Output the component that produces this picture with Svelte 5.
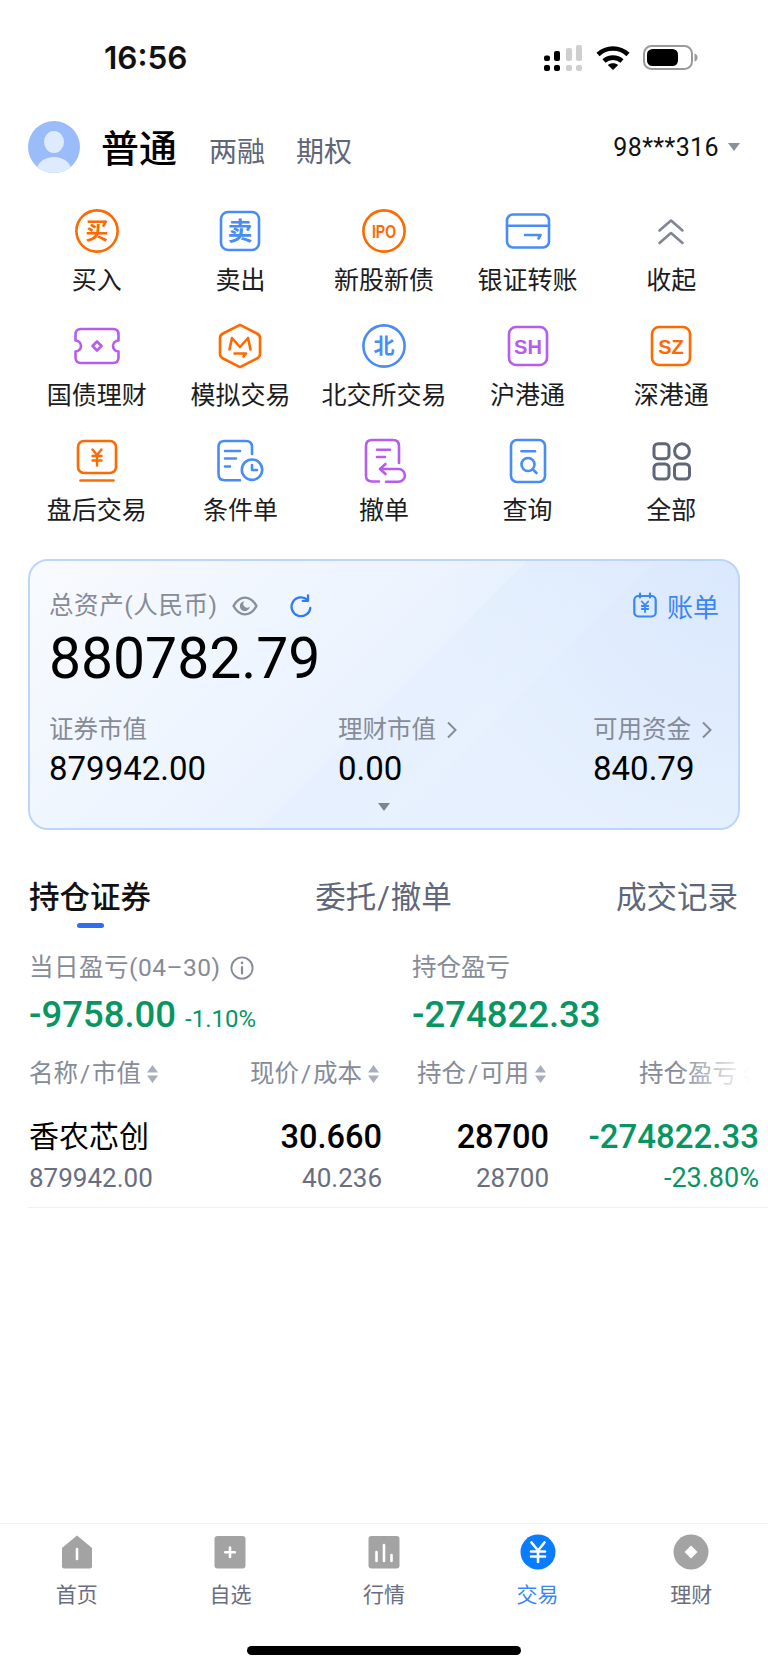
<script lang="ts">
	const actions = [
		{ id: 'buy', label: '买入' },
		{ id: 'sell', label: '卖出' },
		{ id: 'ipo', label: '新股新债' },
		{ id: 'transfer', label: '银证转账' },
		{ id: 'fold', label: '收起' },
		{ id: 'bond', label: '国债理财' },
		{ id: 'sim', label: '模拟交易' },
		{ id: 'bse', label: '北交所交易' },
		{ id: 'sh', label: '沪港通' },
		{ id: 'sz', label: '深港通' },
		{ id: 'after', label: '盘后交易' },
		{ id: 'cond', label: '条件单' },
		{ id: 'cancel', label: '撤单' },
		{ id: 'query', label: '查询' },
		{ id: 'all', label: '全部' }
	];

	const tabs = [
		{ id: 'home', label: '首页' },
		{ id: 'watch', label: '自选' },
		{ id: 'market', label: '行情' },
		{ id: 'trade', label: '交易', active: true },
		{ id: 'wealth', label: '理财' }
	];
</script>

{#snippet actionIcon(id: string)}
	<svg class="act-icon" viewBox="0 0 48 48" fill="none" stroke-width="2.6" stroke-linecap="round" stroke-linejoin="round">
		{#if id === 'buy'}
			<circle cx="24" cy="24" r="20.6" stroke="#ff6a00" />
			<text x="24" y="32" class="glyph" font-size="23" fill="#ff6a00">买</text>
		{:else if id === 'sell'}
			<rect x="5" y="5" width="38" height="38" rx="7" stroke="#4a8cf5" />
			<text x="24" y="33" class="glyph" font-size="25" fill="#4a8cf5">卖</text>
		{:else if id === 'ipo'}
			<circle cx="24" cy="24" r="20.6" stroke="#ff6a00" />
			<text x="24" y="30.5" class="latin" font-size="18" fill="#ff6a00" textLength="24" lengthAdjust="spacingAndGlyphs">IPO</text>
		{:else if id === 'transfer'}
			<rect x="3" y="7.5" width="42" height="33" rx="6" stroke="#4a8cf5" />
			<path d="M3 18.7H45" stroke="#4a8cf5" />
			<path d="M21 28H36.5L34.5 31.5" stroke="#4a8cf5" />
		{:else if id === 'fold'}
			<path d="M12.5 23.5 24 13.5 35.5 23.5M12.5 36 24 26 35.5 36" stroke="#7f8696" />
		{:else if id === 'bond'}
			<path d="M8 7H40Q45.5 7 45.5 12.5V18.5A5.5 5.5 0 0 0 45.5 29.5V35.5Q45.5 41 40 41H8Q2.5 41 2.5 35.5V29.5A5.5 5.5 0 0 0 2.5 18.5V12.5Q2.5 7 8 7Z" stroke="#b65cf0" />
			<path d="M24 19.5 28.5 24 24 28.5 19.5 24Z" stroke="#b65cf0" />
		{:else if id === 'sim'}
			<path d="M24 2.8 41 11.5Q44 13 44 16V32Q44 35 41 36.5L24 45.2 7 36.5Q4 35 4 32V16Q4 13 7 11.5Z" stroke="#ff6a00" />
			<path d="M13.5 27.5 16 16 24 25 32 16 34.5 27.5" stroke="#ff6a00" />
			<path d="M18.5 31.5H30L27.5 34.5" stroke="#ff6a00" />
		{:else if id === 'bse'}
			<circle cx="24" cy="24" r="20.6" stroke="#4a8cf5" />
			<text x="24" y="31" class="glyph" font-size="21" fill="#4a8cf5">北</text>
		{:else if id === 'sh'}
			<rect x="5" y="5" width="38" height="38" rx="7" stroke="#b65cf0" />
			<text x="24" y="31.5" class="latin" font-size="20" fill="#b65cf0">SH</text>
		{:else if id === 'sz'}
			<rect x="5" y="5" width="38" height="38" rx="7" stroke="#ff6a00" />
			<text x="24" y="31.5" class="latin" font-size="20" fill="#ff6a00">SZ</text>
		{:else if id === 'after'}
			<rect x="5" y="4" width="38" height="32" rx="6" stroke="#ff6a00" />
			<path d="M7.5 43.5H40.5" stroke="#ff6a00" />
			<path d="M19.5 12.5 24 18 28.5 12.5M24 18V28.5M19.5 19H28.5M19.5 23.5H28.5" stroke="#ff6a00" stroke-width="2.4" />
		{:else if id === 'cond'}
			<path d="M36 17V10Q36 4 30 4H8.5Q2.5 4 2.5 10V37Q2.5 43.2 8.5 43.2H24" stroke="#4a8cf5" />
			<path d="M9 14H24M9 21.5H20M9 29.5H14" stroke="#4a8cf5" />
			<circle cx="36" cy="32.7" r="10.2" stroke="#4a8cf5" />
			<path d="M36 28V33H41" stroke="#4a8cf5" />
		{:else if id === 'cancel'}
			<path d="M19 44.5H12Q6 44.5 6 38.5V9Q6 3 12 3H33Q39 3 39 9V26" stroke="#b65cf0" />
			<path d="M17 12.7H30M17 20H25" stroke="#b65cf0" />
			<path d="M21 32H38.5A6.4 6.4 0 0 1 38.5 44.8H26" stroke="#b65cf0" />
			<path d="M25.5 27 20 32 25.5 37" stroke="#b65cf0" />
		{:else if id === 'query'}
			<rect x="7" y="3" width="34" height="42" rx="6" stroke="#4a8cf5" />
			<path d="M17.5 14.3H31" stroke="#4a8cf5" />
			<circle cx="24" cy="27.5" r="6.5" stroke="#4a8cf5" />
			<path d="M28.8 32.3 32.5 36" stroke="#4a8cf5" />
		{:else if id === 'all'}
			<rect x="7" y="6.7" width="15" height="15" rx="4" stroke="#5f6679" stroke-width="3" />
			<circle cx="35" cy="14.2" r="7.4" stroke="#5f6679" stroke-width="3" />
			<rect x="7" y="27" width="15" height="15" rx="4" stroke="#5f6679" stroke-width="3" />
			<rect x="27.5" y="27" width="15" height="15" rx="4" stroke="#5f6679" stroke-width="3" />
		{/if}
	</svg>
{/snippet}

{#snippet tabIcon(id: string)}
	<svg class="tab-icon" viewBox="0 0 36 36" stroke-linecap="round">
		{#if id === 'home'}
			<path d="M18 1.5 33 14V32.5Q33 34.5 31 34.5H5Q3 34.5 3 32.5V14Z" fill="#a3a3a3" />
			<path d="M18 15V25" stroke="#fff" stroke-width="2.6" />
		{:else if id === 'watch'}
			<rect x="2.5" y="2" width="31" height="32.5" rx="3" fill="#a3a3a3" />
			<path d="M18 13.5V23M13.2 18.2H22.8" stroke="#fff" stroke-width="2.6" />
		{:else if id === 'market'}
			<rect x="2.5" y="2" width="31" height="32.5" rx="3" fill="#a3a3a3" />
			<path d="M10.5 18V27M18 11V27M25.5 21V27" stroke="#fff" stroke-width="2.6" />
		{:else if id === 'trade'}
			<circle cx="18" cy="18" r="17.5" fill="#0a7cff" />
			<path d="M11.5 8.5 18 16.5 24.5 8.5M18 16.5V28M11 17.5H25M11 22.5H25" stroke="#fff" stroke-width="2.6" fill="none" />
		{:else if id === 'wealth'}
			<circle cx="18" cy="18" r="17.5" fill="#a3a3a3" />
			<path d="M18 11.5 24.5 18 18 24.5 11.5 18Z" fill="#fff" />
		{/if}
	</svg>
{/snippet}

{#snippet sort()}
	<svg class="sort" viewBox="0 0 11 20"><path d="M5.5 1 11 8.5H0ZM5.5 19 0 11.5H11Z" fill="#a9aebb" /></svg>
{/snippet}

<div class="app">
	<div class="status">
		<span class="time">16:56</span>
		<div class="sys">
			<svg width="38" height="26" viewBox="0 0 38 26">
				<g fill="#000">
					<rect x="0" y="10.5" width="6" height="5.5" rx="2" />
					<rect x="10" y="6" width="6" height="10" rx="2" />
					<rect x="0" y="20" width="6" height="6" rx="2" />
					<rect x="10" y="20" width="6" height="6" rx="2" />
				</g>
				<g fill="#cfcfcf">
					<rect x="22" y="3" width="6" height="13" rx="2" />
					<rect x="32" y="0" width="6" height="16" rx="2" />
					<rect x="22" y="20" width="6" height="6" rx="2" />
					<rect x="32" y="20" width="6" height="6" rx="2" />
				</g>
			</svg>
			<svg class="wifi" width="34" height="25" viewBox="0 0 34 25" fill="none" stroke="#000" stroke-width="4.6">
				<path d="M2 9.5C10.5 1.5 23.5 1.5 32 9.5" />
				<path d="M8 16C13 11.5 21 11.5 26 16" />
				<path d="M17 25 11.8 20C14.8 17.6 19.2 17.6 22.2 20Z" fill="#000" stroke="none" />
			</svg>
			<svg class="batt" width="55" height="25" viewBox="0 0 55 25">
				<rect x="1" y="1" width="48" height="23" rx="7.5" fill="none" stroke="#9a9a9a" stroke-width="2" />
				<rect x="4" y="4" width="31" height="17" rx="5.5" fill="#000" />
				<path d="M51.5 8.5C53.5 9 54.5 10.5 54.5 12.5S53.5 16 51.5 16.5Z" fill="#9a9a9a" />
			</svg>
		</div>
	</div>

	<header class="head">
		<svg class="avatar" viewBox="0 0 52 52">
			<defs><clipPath id="av"><circle cx="26" cy="26" r="26" /></clipPath></defs>
			<circle cx="26" cy="26" r="26" fill="#9abcfb" />
			<g clip-path="url(#av)" fill="#deeafe">
				<ellipse cx="26" cy="21" rx="10" ry="11" />
				<ellipse cx="26" cy="49" rx="17" ry="13" />
			</g>
		</svg>
		<nav class="acct-types">
			<span class="type on">普通</span>
			<span class="type">两融</span>
			<span class="type">期权</span>
		</nav>
		<div class="acct-no">98***316<i class="caret"></i></div>
	</header>

	<section class="actions">
		{#each actions as a}
			<div class="action">
				{@render actionIcon(a.id)}
				<span>{a.label}</span>
			</div>
		{/each}
	</section>

	<section class="card">
		<div class="card-top">
			<span class="muted wide">总资产(人民币)</span>
			<svg class="eye" width="26" height="20" viewBox="0 0 26 20" fill="none">
				<path d="M1.5 10C4.5 4.6 8.5 1.6 13 1.6S21.5 4.6 24.5 10C21.5 15.4 17.5 18.4 13 18.4S4.5 15.4 1.5 10Z" stroke="#8a8f9c" stroke-width="2.4" stroke-linejoin="round" />
				<path d="M12.5 5.2A5 5 0 1 0 17.8 10.5 3.4 3.4 0 0 1 12.5 5.2Z" fill="#8a8f9c" />
			</svg>
			<svg class="refresh" width="22" height="24" viewBox="0 0 22 24" fill="none" stroke="#2f7bf0" stroke-width="2.3" stroke-linecap="round" stroke-linejoin="round">
				<path d="M17.5 6A9.4 9.4 0 1 0 20.3 14" />
				<path d="M18 1.5V6.8H12.7" />
			</svg>
			<div class="bill">
				<svg width="24" height="26" viewBox="0 0 24 26" fill="none" stroke="#3a86f4" stroke-width="2.2" stroke-linecap="round" stroke-linejoin="round">
					<rect x="1.3" y="4" width="21.4" height="20.5" rx="4" />
					<path d="M7 1.5V5.5M17 1.5V5.5" />
					<path d="M8.8 9.5 12 13 15.2 9.5M12 13V20M8.8 14H15.2M8.8 17H15.2" stroke-width="1.8" />
				</svg>
				<span>账单</span>
			</div>
		</div>
		<div class="total">880782.79</div>
		<div class="card-cols">
			<div>
				<div class="muted">证券市值</div>
				<div class="val">879942.00</div>
			</div>
			<div>
				<div class="muted">理财市值<svg class="chev" width="12" height="20" viewBox="0 0 12 20" fill="none" stroke="#868b98" stroke-width="2"><path d="M2 2.5 9.5 10 2 17.5" /></svg></div>
				<div class="val">0.00</div>
			</div>
			<div>
				<div class="muted">可用资金<svg class="chev" width="12" height="20" viewBox="0 0 12 20" fill="none" stroke="#868b98" stroke-width="2"><path d="M2 2.5 9.5 10 2 17.5" /></svg></div>
				<div class="val">840.79</div>
			</div>
		</div>
		<i class="card-caret"></i>
	</section>

	<nav class="hold-tabs">
		<span class="active">持仓证券</span>
		<span>委托<i class="sl">/</i>撤单</span>
		<span>成交记录</span>
	</nav>

	<section class="pnl">
		<div>
			<div class="pnl-label"><span class="dated">当日盈亏(04–30)</span>
				<svg class="info" width="24" height="24" viewBox="0 0 24 24" fill="none" stroke="#858b99" stroke-width="1.8" stroke-linecap="round"><circle cx="12" cy="12" r="10.6" /><path d="M12 11V17.5" stroke-width="2.2" /><path d="M12 6.8V7" stroke-width="2.6" /></svg>
			</div>
			<div class="pnl-val">-9758.00<small>-1.10%</small></div>
		</div>
		<div>
			<div class="pnl-label">持仓盈亏</div>
			<div class="pnl-val">-274822.33</div>
		</div>
	</section>

	<div class="thead">
		<span>名称<i class="sl">/</i>市值{@render sort()}</span>
		<span>现价<i class="sl">/</i>成本{@render sort()}</span>
		<span>持仓<i class="sl">/</i>可用{@render sort()}</span>
		<span class="fade">持仓盈亏{@render sort()}</span>
	</div>

	<div class="trow">
		<div>
			<div class="main name">香农芯创</div>
			<div class="sub">879942.00</div>
		</div>
		<div>
			<div class="main">30.660</div>
			<div class="sub">40.236</div>
		</div>
		<div>
			<div class="main">28700</div>
			<div class="sub">28700</div>
		</div>
		<div class="down">
			<div class="main">-274822.33</div>
			<div class="sub">-23.80%</div>
		</div>
	</div>

	<footer class="tabbar">
		<div class="tabs">
			{#each tabs as t}
				<div class="tab" class:active={t.active}>
					{@render tabIcon(t.id)}
					<span>{t.label}</span>
				</div>
			{/each}
		</div>
		<div class="home-bar"></div>
	</footer>
</div>

<style>
	:global(body) {
		margin: 0;
		background: #fff;
	}
	.app {
		width: 768px;
		height: 1669px;
		display: flex;
		flex-direction: column;
		overflow: hidden;
		background: #fff;
		color: #111;
		font-family: Roboto, 'Noto Sans CJK SC', sans-serif;
	}
	.sl {
		font-style: normal;
		padding: 0 2px;
	}

	.status {
		height: 115px;
		flex: none;
		display: flex;
		align-items: center;
		padding: 0 70px 0 104px;
		box-sizing: border-box;
	}
	.time {
		font-family: Inter, sans-serif;
		font-size: 31.5px;
		font-weight: 600;
	}
	.sys {
		margin-left: auto;
		display: flex;
		align-items: center;
	}
	.wifi {
		margin-left: 14px;
	}
	.batt {
		margin-left: 13px;
	}

	.head {
		height: 52px;
		flex: none;
		margin-top: 6px;
		padding: 0 28px;
		display: flex;
		align-items: center;
	}
	.avatar {
		width: 52px;
		height: 52px;
		flex: none;
	}
	.acct-types {
		display: flex;
		align-items: baseline;
		margin: 8px 0 0 21px;
		gap: 31px;
	}
	.type {
		font-size: 28px;
		color: #5f6679;
		line-height: 40px;
	}
	.type.on {
		font-size: 38px;
		font-weight: 500;
		color: #000;
		margin-right: 1px;
	}
	.acct-no {
		margin-left: auto;
		font-size: 25px;
		display: flex;
		align-items: center;
		letter-spacing: 0.4px;
	}
	.caret {
		width: 0;
		height: 0;
		border: 6px solid transparent;
		border-top: 8px solid #8a8f9c;
		border-bottom: 0;
		margin-left: 9px;
	}

	.actions {
		flex: none;
		margin-top: 34px;
		padding: 0 25px;
		display: grid;
		grid-template-columns: repeat(5, 143.6px);
		grid-auto-rows: 89px;
		row-gap: 26px;
	}
	.action {
		display: flex;
		flex-direction: column;
		align-items: center;
		font-size: 25px;
		line-height: 30px;
		color: #1c1c1e;
		white-space: nowrap;
	}
	.action span {
		margin-top: 11px;
	}
	.act-icon {
		width: 48px;
		height: 48px;
		flex: none;
	}
	.glyph {
		font-family: 'Noto Sans CJK SC', sans-serif;
		font-weight: 700;
		text-anchor: middle;
	}
	.latin {
		font-family: 'Liberation Sans', sans-serif;
		font-weight: 700;
		text-anchor: middle;
	}

	.card {
		flex: none;
		position: relative;
		box-sizing: border-box;
		width: 712px;
		height: 271px;
		margin: 33px 0 0 28px;
		padding: 30px 19px 0;
		border: 2px solid #bcd6fb;
		border-radius: 20px;
		background: linear-gradient(135deg, rgba(255, 255, 255, 0.72) 0, rgba(255, 255, 255, 0.16) 51%, rgba(255, 255, 255, 0) 51%, rgba(255, 255, 255, 0.08) 64%, rgba(255, 255, 255, 0) 64%),
			radial-gradient(circle at 100% 0, #dae8fd 0, rgba(218, 232, 253, 0) 300px),
			#e6f0fe;
	}
	.card-top {
		height: 30px;
		display: flex;
		align-items: center;
	}
	.muted {
		font-size: 24.5px;
		line-height: 30px;
		color: #868b98;
		display: flex;
		align-items: center;
	}
	.wide {
		letter-spacing: 0.6px;
	}
	.eye {
		margin-left: 14px;
	}
	.refresh {
		margin-left: 32px;
	}
	.bill {
		margin: -2px 0 0 auto;
		display: flex;
		align-items: center;
		gap: 10px;
		font-size: 26px;
		color: #3a86f4;
	}
	.total {
		font-size: 57px;
		line-height: 64px;
		margin-top: 6px;
		color: #000;
	}
	.card-cols {
		margin-top: 24px;
		display: grid;
		grid-template-columns: 289px 255px 1fr;
	}
	.chev {
		margin-left: 10px;
	}
	.val {
		font-size: 33px;
		line-height: 40px;
		margin-top: 4px;
		color: #000;
	}
	.card-caret {
		display: block;
		width: 0;
		height: 0;
		margin: 14px auto 0;
		border: 6.5px solid transparent;
		border-top: 8px solid #7f8490;
		border-bottom: 0;
	}

	.hold-tabs {
		flex: none;
		height: 40px;
		margin-top: 48px;
		padding: 0 30px 0 29px;
		display: flex;
		justify-content: space-between;
		font-size: 30.5px;
		line-height: 40px;
		color: #5f6679;
	}
	.hold-tabs span {
		position: relative;
	}
	.hold-tabs .sl {
		padding: 0 1px;
	}
	.hold-tabs .active {
		color: #111;
		font-weight: 500;
	}
	.hold-tabs .active::after {
		content: '';
		position: absolute;
		left: 48px;
		top: 45px;
		width: 27px;
		height: 5px;
		border-radius: 3px;
		background: #2f6fed;
	}

	.pnl {
		flex: none;
		margin-top: 35px;
		padding-left: 29px;
		display: grid;
		grid-template-columns: 383px 1fr;
	}
	.pnl-label {
		font-size: 24.5px;
		line-height: 30px;
		color: #868b98;
		display: flex;
		align-items: center;
	}
	.dated {
		letter-spacing: 0.5px;
	}
	.info {
		margin-left: 9px;
	}
	.pnl-val {
		margin-top: 14px;
		font-size: 36.5px;
		line-height: 36px;
		font-weight: 500;
		color: #079562;
		display: flex;
		align-items: baseline;
	}
	.pnl-val small {
		font-size: 24px;
		font-weight: 400;
		margin-left: 9px;
	}

	.thead,
	.trow {
		flex: none;
		display: grid;
		grid-template-columns: 203px 150px 167px 210px;
		padding-left: 29px;
		text-align: right;
	}
	.thead {
		margin-top: 22px;
		font-size: 24.5px;
		line-height: 30px;
		color: #858b99;
		position: relative;
	}
	.thead span {
		display: flex;
		align-items: center;
		justify-content: flex-end;
		padding-right: 3px;
		white-space: nowrap;
	}
	.thead span:first-child {
		justify-content: flex-start;
	}
	.thead .fade {
		padding-right: 5px;
	}
	.thead::after {
		content: '';
		position: absolute;
		top: 0;
		right: 0;
		bottom: 0;
		width: 90px;
		background: linear-gradient(to right, rgba(255, 255, 255, 0), #fff 80%);
	}
	.sort {
		width: 11px;
		height: 20px;
		margin-left: 6px;
		flex: none;
	}
	.trow {
		margin-top: 30px;
		margin-left: 28px;
		padding: 0 0 14px 1px;
		border-bottom: 1.5px solid #eff0f3;
	}
	.trow > div:first-child {
		text-align: left;
	}
	.main {
		font-size: 32.5px;
		line-height: 36px;
		font-weight: 500;
		color: #000;
	}
	.main.name {
		font-size: 30px;
		font-weight: 400;
	}
	.sub {
		font-size: 26px;
		line-height: 30px;
		margin-top: 8px;
		color: #686e80;
	}
	.down .main {
		font-size: 33px;
	}
	.down .sub {
		font-size: 27px;
	}
	.down .main,
	.down .sub {
		color: #079562;
		white-space: nowrap;
	}

	.tabbar {
		margin-top: auto;
		flex: none;
		height: 146px;
		box-sizing: border-box;
		border-top: 1px solid #f2f2f4;
		display: flex;
		flex-direction: column;
		align-items: center;
	}
	.tabs {
		width: 100%;
		box-sizing: border-box;
		padding: 10px 0 0 0;
		display: grid;
		grid-template-columns: repeat(5, 153.6px);
	}
	.tab {
		display: flex;
		flex-direction: column;
		align-items: center;
		font-size: 21px;
		line-height: 28px;
		color: #686e80;
	}
	.tab.active {
		color: #3a86f4;
	}
	.tab span {
		margin-top: 11px;
	}
	.tab-icon {
		width: 36px;
		height: 36px;
	}
	.home-bar {
		width: 274px;
		height: 9px;
		border-radius: 5px;
		background: #000;
		margin-top: 37px;
	}
</style>
